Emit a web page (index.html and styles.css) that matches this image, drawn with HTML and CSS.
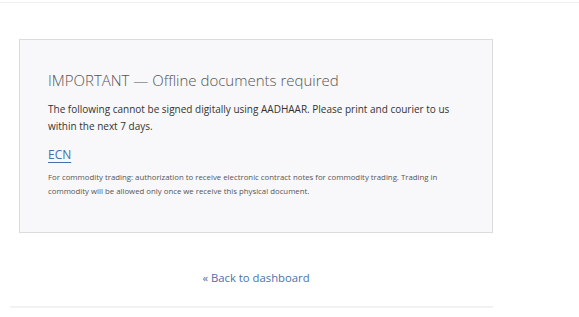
FILE: index.html
```html
<!DOCTYPE html>
<html lang="en">
<head>
    <meta charset="UTF-8">
    <meta name="viewport" content="width=device-width, initial-scale=1.0">
    <title>Offline documents</title>
    <link rel="stylesheet" href="styles.css">
</head>
<body>
    <div class="topbar"></div>
    <div class="page">
        <div class="notice">
            <h2>IMPORTANT &mdash; Offline documents required</h2>
            <p class="lead">The following cannot be signed digitally using AADHAAR. Please print and courier to us within the next 7 days.</p>
            <div class="doc">
                <a href="#" class="doc-name">ECN</a>
                <p class="doc-desc">For commodity trading: authorization to receive electronic contract notes for commodity trading. Trading in commodity will be allowed only once we receive this physical document.</p>
            </div>
        </div>
        <div class="back">
            <a href="#">&laquo; Back to dashboard</a>
        </div>
        <div class="footer-line"></div>
    </div>
</body>
</html>
```

FILE: styles.css
```css
body {
    font-family: 'Open Sans', sans-serif;
    background-color: #fff;
    margin: 0;
    color: #333;
}
.topbar {
    height: 2px;
    border-bottom: 1px solid #f0f0f2;
}
.page {
    width: 474px;
    margin-left: 19px;
    padding-top: 36px;
}
.notice {
    background-color: #f8f8fa;
    border: 1px solid #dcdcdf;
    padding: 28px 20px 36px 28px;
    height: 194px;
    box-sizing: border-box;
}
h2 {
    font-weight: 300;
    font-size: 15px;
    color: #555;
    margin: 0 0 9px 0;
    line-height: 24px;
}
.lead {
    font-size: 10px;
    line-height: 17px;
    margin: 0 0 7px 0;
    color: #333;
}
.doc-name {
    font-size: 12px;
    color: #4a6fa5;
    text-decoration: underline;
    text-underline-offset: 3px;
}
.doc-desc {
    max-width: 395px;
    font-size: 7.8px;
    line-height: 13.5px;
    color: #555;
    margin: 7px 0 0 0;
}
.back {
    text-align: center;
    margin-top: 32px;
}
.back a {
    font-size: 11.3px;
    color: #4a72a8;
    text-decoration: none;
}
.footer-line {
    margin-top: 19px;
    margin-left: -9px;
    border-top: 2px solid #f2f2f4;
}
```
